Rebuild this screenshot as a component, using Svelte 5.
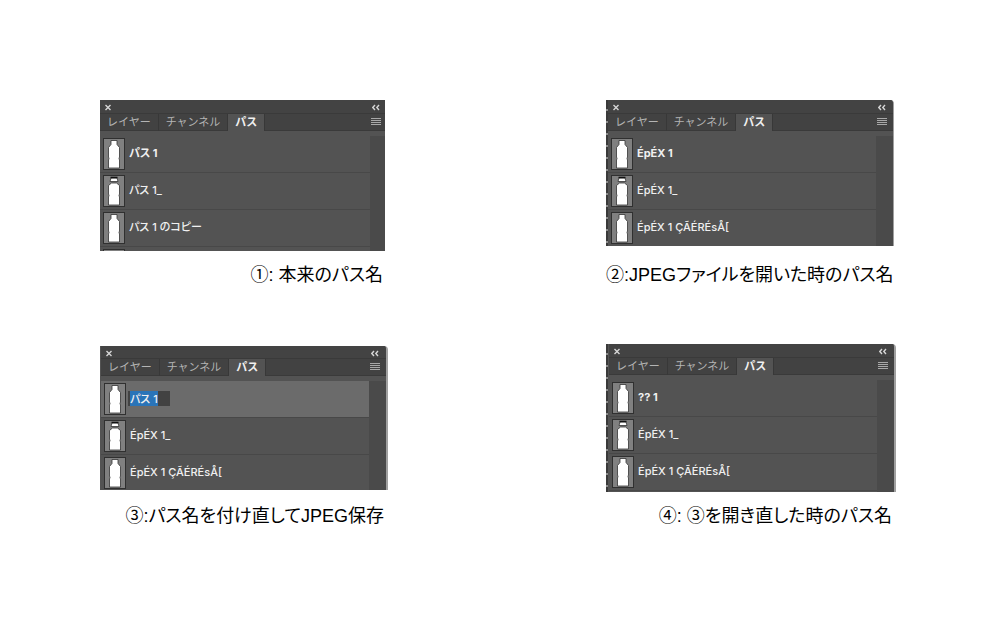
<script>
    import { onMount } from "svelte"

    const tabs = ["レイヤー", "チャンネル", "パス"]
    const panels = [
        {
            id: "original",
            caption: "①: 本来のパス名",
            paths: [
                { name: "パス 1", bold: true },
                { name: "パス 1_", cap: true },
                { name: "パス 1 のコピー" },
                { name: "" },
            ],
        },
        {
            id: "opened",
            caption: "②:JPEGファイルを開いた時のパス名",
            paths: [
                { name: "ÉpÉX 1", bold: true },
                { name: "ÉpÉX 1_", cap: true },
                { name: "ÉpÉX 1 ÇÃÉRÉsÅ[" },
            ],
        },
        {
            id: "renamed",
            caption: "③:パス名を付け直してJPEG保存",
            paths: [
                { name: "パス 1", editing: true },
                { name: "ÉpÉX 1_", cap: true },
                { name: "ÉpÉX 1 ÇÃÉRÉsÅ[" },
            ],
        },
        {
            id: "reopened",
            caption: "④: ③を開き直した時のパス名",
            paths: [
                { name: "?? 1", bold: true },
                { name: "ÉpÉX 1_", cap: true },
                { name: "ÉpÉX 1 ÇÃÉRÉsÅ[" },
            ],
        },
    ]

    onMount(() => {
        const input = document.querySelector(".rename")
        input.focus()
        input.select()
    })
</script>

<main>
    {#each panels as panel}
        <figure class={panel.id}>
            <section class="panel">
                <header class="title">
                    <button aria-label="閉じる">
                        <svg width="7" height="7" viewBox="0 0 7 7"><path d="M.5 1L5.5 6M5.5 1L.5 6" /></svg>
                    </button>
                    <button class="side collapse" aria-label="折りたたむ">
                        <svg width="8" height="7" viewBox="0 0 8 7"><path d="M3 1L.8 3.5L3 6M7 1L4.8 3.5L7 6" /></svg>
                    </button>
                </header>
                <nav>
                    {#each tabs as tab, i}
                        <button class="tab" class:active={i == 2}>{tab}</button>
                    {/each}
                    <button class="side menu" aria-label="メニュー">
                        <svg width="10" height="8" viewBox="0 0 10 8"><path d="M0 .5H10M0 2.5H10M0 4.5H10M0 6.5H10" /></svg>
                    </button>
                </nav>
                <div class="content">
                    <ul>
                        {#each panel.paths as path}
                            <li class:selected={path.editing}>
                                <svg class="thumb" width="22" height="32" viewBox="0 0 22 32">
                                    <rect x=".5" y=".5" width="21" height="31" fill="#808080" stroke="#303030" />
                                    {#if path.cap}
                                        <path
                                            d="M8.5 8H13.5L16.5 10.5V19L16 20.5L16.5 22V30H5.5V22L6 20.5L5.5 19V10.5Z"
                                            fill="#fff"
                                            stroke="#333"
                                            stroke-width=".8"
                                        />
                                        <path d="M8 3H14L15 6.5H7Z" fill="#fff" stroke="#333" stroke-width=".8" />
                                        <path d="M7.5 2.5H14.5" stroke="#111" stroke-width="1.6" />
                                    {:else}
                                        <path
                                            d="M8 2.5H14V6.5L16.5 9.5V19L16 20.5L16.5 22V30H5.5V22L6 20.5L5.5 19V9.5L8 6.5Z"
                                            fill="#fff"
                                            stroke="#333"
                                            stroke-width=".8"
                                        />
                                    {/if}
                                </svg>
                                {#if path.editing}
                                    <input class="rename" aria-label="パス名" value={path.name} />
                                {:else}
                                    <span class="name" class:bold={path.bold}>{path.name}</span>
                                {/if}
                            </li>
                        {/each}
                    </ul>
                    <div class="side scroll"></div>
                </div>
            </section>
            <figcaption>{panel.caption}</figcaption>
        </figure>
    {/each}
</main>

<style>
    :global(body) {
        margin: 0;
        background: #fff;
    }
    main {
        display: grid;
        grid-template-columns: 288fr 290fr;
        column-gap: 218px;
        row-gap: 57px;
        padding: 100px;
        font-family: Inter, "Noto Sans CJK JP", sans-serif;
    }
    figure {
        --side: 17px;
        --list: 110px;
        display: flex;
        flex-direction: column;
        min-width: 0;
        margin: 0;
    }
    .panel {
        background: #535353;
        border-right: 2px solid #a0a0a0;
        border-top-right-radius: 4px;
        overflow: hidden;
    }
    .original {
        --side: 15px;
        --list: 115px;
        margin-right: 3px;
    }
    .original .panel {
        border-right: none;
        border-radius: 0;
    }
    .opened {
        margin-right: 2px;
    }
    .opened .panel {
        border-right-width: 1px;
    }
    .renamed {
        --list: 109px;
        padding-top: 2px;
    }
    .renamed .panel {
        padding-left: 1px;
    }
    .renamed .title {
        height: 13px;
    }
    .reopened {
        --list: 112px;
    }
    /* ruler ticks left of the panel */
    .opened .panel,
    .reopened .panel {
        padding-left: 2px;
        background: linear-gradient(#535353, #535353) 2px 0 no-repeat,
            repeating-linear-gradient(#3a3a3a 0 9px, #8c8c8c 9px 11px, #3a3a3a 11px 12px);
    }
    .reopened .panel {
        padding-left: 3px;
    }
    button {
        display: flex;
        align-items: center;
        padding: 0;
        border: none;
        background: none;
        color: inherit;
        font: inherit;
    }
    button path {
        fill: none;
        stroke: #d6d6d6;
        stroke-width: 1.4;
    }
    .side {
        width: var(--side);
        flex: none;
        box-sizing: border-box;
    }
    .title {
        display: flex;
        justify-content: space-between;
        height: 14px;
        box-sizing: border-box;
        padding: 2px 0 0 5px;
        background: #434343;
        border-bottom: 1px solid #3a3a3a;
    }
    .collapse {
        padding-left: 2px;
    }
    nav {
        display: flex;
        height: 17px;
        background: #424242;
        color: #b4b4b4;
        font-size: 11px;
        line-height: 14px;
        box-shadow: inset 0 -1px #3a3a3a;
    }
    .tab {
        padding: 0 7px 2px;
        border-right: 1px solid #383838;
        white-space: nowrap;
    }
    .tab.active {
        background: #535353;
        color: #f0f0f0;
        font-weight: 700;
    }
    .menu {
        margin-left: auto;
        padding: 0 0 1px 1px;
    }
    .menu path {
        stroke: #a8a8a8;
        stroke-width: 1;
    }
    .content {
        display: flex;
        padding-top: 5px;
        height: var(--list);
        overflow: hidden;
    }
    .scroll {
        background: #4a4a4a;
    }
    ul {
        flex: 1;
        min-width: 0;
        margin: 0;
        padding: 0;
        list-style: none;
    }
    li {
        display: flex;
        align-items: center;
        gap: 4px;
        height: 37px;
        box-sizing: border-box;
        padding-left: 3px;
        border-bottom: 1px solid #484848;
        color: #f0f0f0;
        font-size: 11px;
        font-weight: 500;
        font-feature-settings: "palt";
    }
    .selected {
        background: #6b6b6b;
    }
    .thumb {
        flex: none;
    }
    .name {
        padding-bottom: 2px;
        line-height: 16px;
        white-space: nowrap;
    }
    .bold {
        font-weight: 700;
    }
    .rename {
        width: 42px;
        height: 15px;
        box-sizing: border-box;
        margin: 0 0 2px -2px;
        padding: 0 2px;
        border: none;
        outline: none;
        background: #424242;
        color: #f0f0f0;
        font: inherit;
        font-feature-settings: inherit;
    }
    .rename::selection {
        background: #2a74b8;
        color: #f0f0f0;
    }
    figcaption {
        margin-top: auto;
        padding: 12px 4px 0 0;
        color: #000;
        font-family: "Liberation Sans", "Noto Sans CJK JP", sans-serif;
        font-size: 18px;
        line-height: 24px;
        text-align: right;
        white-space: nowrap;
        font-feature-settings: "palt";
    }
    .original figcaption {
        padding-right: 2px;
    }
    .opened figcaption {
        padding-right: 2px;
    }
</style>
